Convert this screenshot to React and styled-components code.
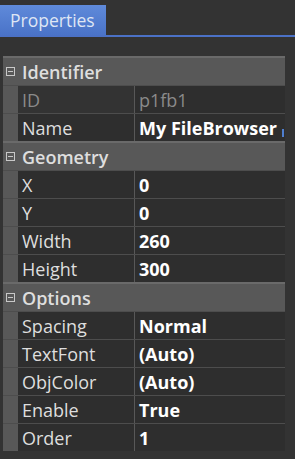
import React from 'react';
import styled, { createGlobalStyle } from 'styled-components';

const GlobalStyle = createGlobalStyle`
  html, body {
    margin: 0;
    padding: 0;
    background: #333333;
  }
  body {
    font-family: "Open Sans", "Noto Sans", sans-serif;
    width: 295px;
    height: 459px;
    overflow: hidden;
  }
`;

const Wrapper = styled.div`
  display: flex;
  flex-direction: column;
  height: 459px;
`;

const TabBar = styled.div`
  display: flex;
  align-items: flex-end;
  padding-top: 5px;
  border-bottom: 2px solid #4b71c6;
`;

const Tab = styled.div`
  width: 106px;
  height: 30px;
  box-sizing: border-box;
  padding-left: 10px;
  display: flex;
  align-items: center;
  background: linear-gradient(#5f8ada, #4a73c8);
  color: #dfe6f4;
  font-size: 17.5px;
`;

const Panel = styled.div`
  margin: 19px 10px 0 3px;
  background: #4b4b4b;
  display: flex;
  flex-direction: column;
`;

const Section = styled.div`
  display: flex;
  flex-direction: column;
  border-top: 2px solid #6a6a6a;
`;

const Header = styled.div`
  height: 27px;
  display: flex;
  align-items: center;
  background: #585858;
  color: #dedede;
  font-size: 18px;
  font-weight: 600;
`;

const Toggle = styled.span`
  width: 14px;
  display: flex;
  justify-content: center;
  margin-right: 5px;
`;

const Row = styled.div`
  display: grid;
  grid-template-columns: 14px 116px 1fr;
  column-gap: 1px;
  border-top: 1px solid #4d4d4d;
  height: 27px;
  background: #585858;
`;

const Gutter = styled.div`
  background: #585858;
  margin-right: -1px;
`;

const Cell = styled.div`
  display: flex;
  align-items: center;
  padding-left: 4px;
  background: ${p => (p.$dim && !p.$value ? '#333333' : '#2e2e2e')};
  color: ${p => (p.$dim ? '#8a8a8a' : p.$value ? '#ffffff' : '#dedede')};
  font-size: 18px;
  font-weight: ${p => (p.$value && !p.$dim ? 700 : 400)};
  white-space: nowrap;
  overflow: hidden;
  position: relative;
`;

const Caret = styled.span`
  position: absolute;
  right: 1px;
  top: 15px;
  width: 2px;
  height: 8px;
  background: #4f7fd0;
`;

const MinusBox = () => (
  <svg width="9" height="9" viewBox="0 0 9 9">
    <rect x="0.5" y="0.5" width="8" height="8" fill="none" stroke="#c8c8c8" strokeWidth="1" />
    <line x1="2" y1="4.5" x2="7" y2="4.5" stroke="#c8c8c8" strokeWidth="1" />
  </svg>
);

const sections = [
  {
    title: 'Identifier',
    rows: [
      { name: 'ID', value: 'p1fb1', dim: true },
      { name: 'Name', value: 'My FileBrowser', caret: true },
    ],
  },
  {
    title: 'Geometry',
    rows: [
      { name: 'X', value: '0' },
      { name: 'Y', value: '0' },
      { name: 'Width', value: '260' },
      { name: 'Height', value: '300' },
    ],
  },
  {
    title: 'Options',
    rows: [
      { name: 'Spacing', value: 'Normal' },
      { name: 'TextFont', value: '(Auto)' },
      { name: 'ObjColor', value: '(Auto)' },
      { name: 'Enable', value: 'True' },
      { name: 'Order', value: '1' },
    ],
  },
];

export default function App() {
  return (
    <Wrapper>
      <GlobalStyle />
      <TabBar>
        <Tab>Properties</Tab>
      </TabBar>
      <Panel>
        {sections.map(sec => (
          <Section key={sec.title}>
            <Header>
              <Toggle><MinusBox /></Toggle>
              {sec.title}
            </Header>
            {sec.rows.map(r => (
              <Row key={r.name}>
                <Gutter />
                <Cell $dim={r.dim}>{r.name}</Cell>
                <Cell $value $dim={r.dim}>
                  {r.value}
                  {r.caret && <Caret />}
                </Cell>
              </Row>
            ))}
          </Section>
        ))}
      </Panel>
    </Wrapper>
  );
}
